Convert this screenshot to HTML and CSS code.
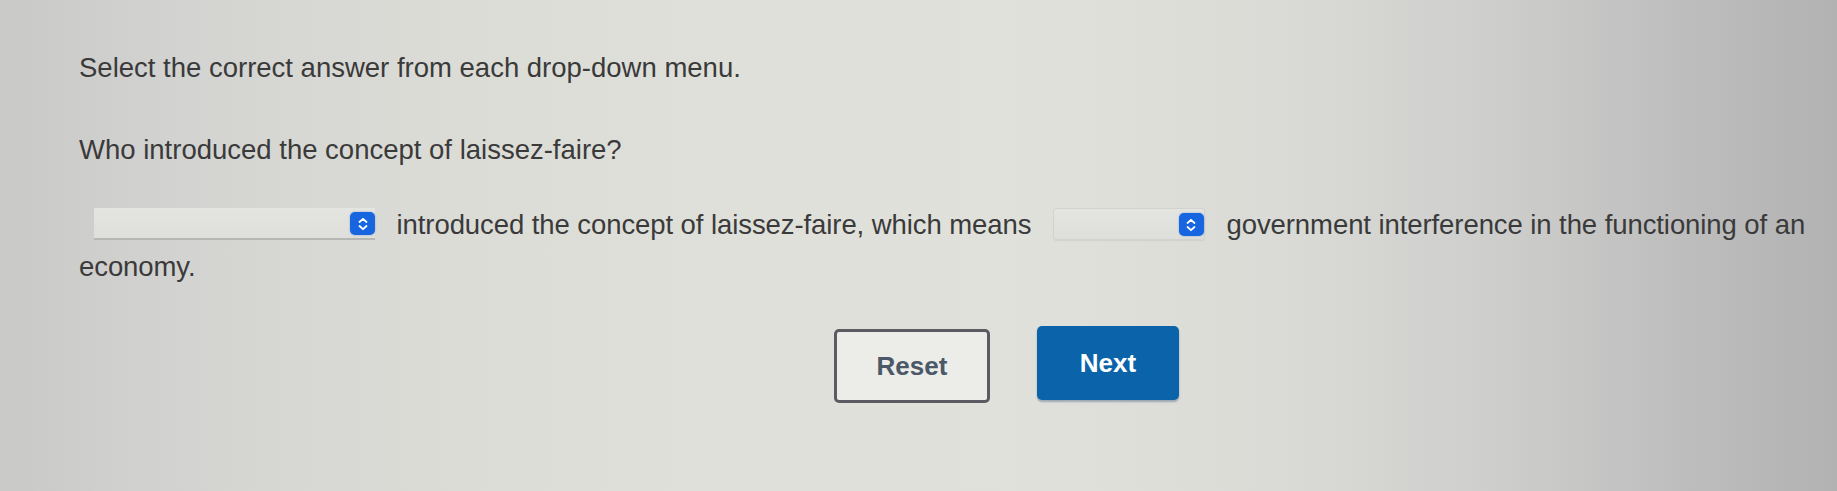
FILE: index.html
```html
<!DOCTYPE html>
<html lang="en">
<head>
<meta charset="utf-8">
<title>Drop-down question</title>
<link rel="stylesheet" href="styles.css">
</head>
<body>
<main class="page">
  <p class="instructions">Select the correct answer from each drop-down menu.</p>
  <p class="question">Who introduced the concept of laissez-faire?</p>
  <p class="sentence"><span class="dropdown dropdown-wide"><span class="stepper"><svg viewBox="0 0 24 22" width="24" height="22"><path d="M8.5 9 L12 5.8 L15.5 9" /><path d="M8.5 13 L12 16.2 L15.5 13" /></svg></span></span> introduced the concept of laissez-faire, which means <span class="dropdown dropdown-narrow"><span class="stepper"><svg viewBox="0 0 24 22" width="24" height="22"><path d="M8.5 9 L12 5.8 L15.5 9" /><path d="M8.5 13 L12 16.2 L15.5 13" /></svg></span></span> government interference in the functioning of an economy.</p>
  <div class="actions">
    <button class="btn btn-reset" type="button">Reset</button>
    <button class="btn btn-next" type="button">Next</button>
  </div>
</main>
</body>
</html>
```

FILE: styles.css
```css
html, body {
  margin: 0;
  padding: 0;
  height: 100%;
}

body {
  background: linear-gradient(to right,
    #c9c9c8 0%,
    #d3d3d1 10%,
    #dcdcd7 25%,
    #e0e0da 40%,
    #e1e1dc 55%,
    #dadad6 70%,
    #cdcdcc 82%,
    #bdbdbd 92%,
    #b2b2b2 100%);
  font-family: "Liberation Sans", Arial, sans-serif;
  color: #3a3a3a;
  overflow: hidden;
}

.page {
  padding: 48px 20px 0 79px;
}

.page p {
  margin: 0;
  font-size: 27.5px;
  line-height: 40px;
}

.instructions {
  margin-bottom: 42px !important;
}

.question {
  margin-bottom: 34px !important;
}

.page .sentence {
  line-height: 42px;
  letter-spacing: -0.08px;
}

.dropdown {
  display: inline-block;
  position: relative;
  height: 32px;
  vertical-align: -6px;
  margin: 0 14px;
  background: linear-gradient(#e4e4e1, #dededa);
  border-radius: 3px;
  box-sizing: border-box;
}

.dropdown-wide {
  width: 281px;
  margin-left: 15px;
  border-bottom: 2px solid #b6b6b4;
  border-radius: 0;
}

.dropdown-narrow {
  width: 152px;
  border: 1px solid #d2d2cf;
  box-shadow: 0 1px 1px rgba(0,0,0,0.06);
}

.stepper {
  position: absolute;
  right: 0;
  top: 4px;
  width: 25px;
  height: 23px;
  background: #1766e0;
  border-radius: 5px;
  display: flex;
  align-items: center;
  justify-content: center;
  box-shadow: 0 0 2px rgba(40,110,230,0.5);
}

.stepper svg {
  display: block;
}

.stepper path {
  fill: none;
  stroke: #ffffff;
  stroke-width: 1.8;
  stroke-linecap: round;
  stroke-linejoin: round;
}

.actions {
  display: flex;
  gap: 47px;
  padding-left: 755px;
  margin-top: 38px;
}

.btn {
  font-family: "Liberation Sans", Arial, sans-serif;
  font-weight: bold;
  font-size: 26px;
  height: 74px;
  border-radius: 5px;
  box-sizing: border-box;
  cursor: pointer;
}

.btn-reset {
  width: 156px;
  margin-top: 3px;
  background: #ecece9;
  border: 3px solid #5b5c62;
  color: #4a5868;
}

.btn-next {
  width: 142px;
  background: #0b63a9;
  border: none;
  color: #ffffff;
  box-shadow: 0 2px 2px rgba(0,40,90,0.3);
}
```
